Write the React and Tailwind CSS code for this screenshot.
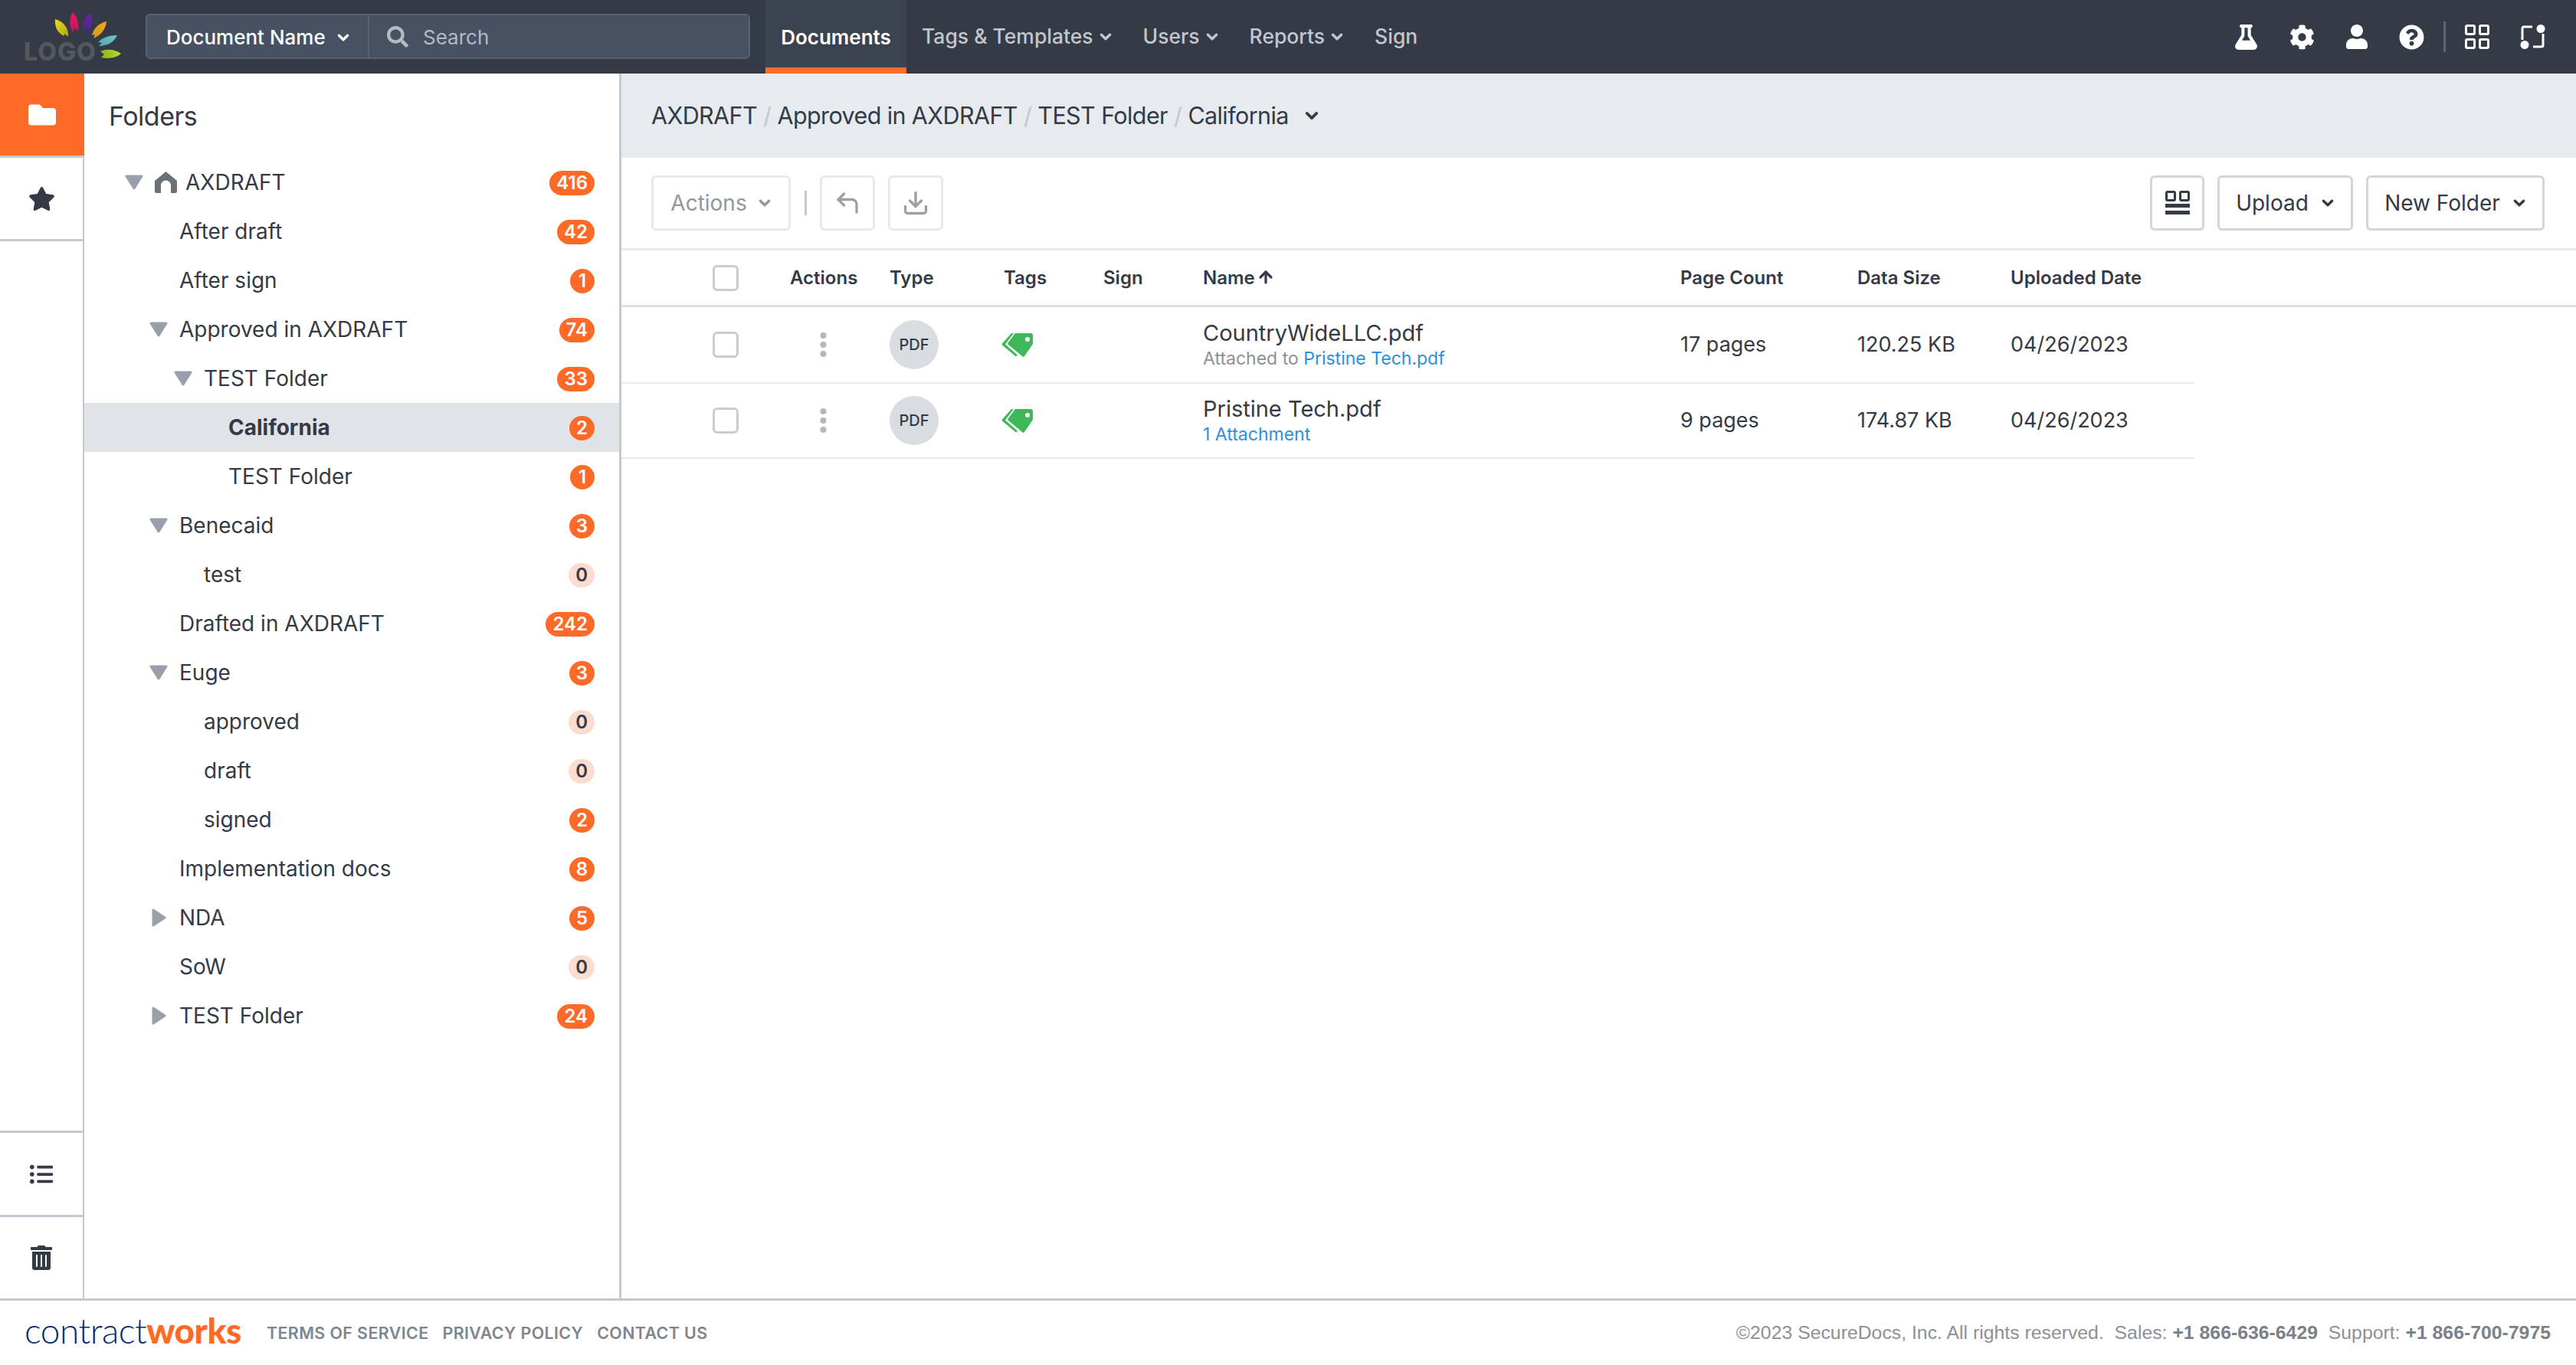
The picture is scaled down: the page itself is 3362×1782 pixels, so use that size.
import { CornerUpLeft, Download, ArrowUp } from "lucide-react";
import { FaFlask, FaCog, FaUser, FaQuestionCircle, FaFolder, FaStar, FaListUl, FaTrashAlt, FaSearch } from "react-icons/fa";

const font = "font-['Inter',sans-serif]";

const tree = [
  { name: "AXDRAFT", count: 416, level: 0, open: true, home: true },
  { name: "After draft", count: 42, level: 1 },
  { name: "After sign", count: 1, level: 1 },
  { name: "Approved in AXDRAFT", count: 74, level: 1, open: true },
  { name: "TEST Folder", count: 33, level: 2, open: true },
  { name: "California", count: 2, level: 3, active: true },
  { name: "TEST Folder", count: 1, level: 3 },
  { name: "Benecaid", count: 3, level: 1, open: true },
  { name: "test", count: 0, level: 2 },
  { name: "Drafted in AXDRAFT", count: 242, level: 1 },
  { name: "Euge", count: 3, level: 1, open: true },
  { name: "approved", count: 0, level: 2 },
  { name: "draft", count: 0, level: 2 },
  { name: "signed", count: 2, level: 2 },
  { name: "Implementation docs", count: 8, level: 1 },
  { name: "NDA", count: 5, level: 1, closed: true },
  { name: "SoW", count: 0, level: 1 },
  { name: "TEST Folder", count: 24, level: 1, closed: true },
];

const indent = ["pl-[53px]", "pl-[85px]", "pl-[117px]", "pl-[149px]"];

const files = [
  {
    name: "CountryWideLLC.pdf",
    sub: (
      <>
        <span className="text-[#8b9097]">Attached to </span>
        <span className="text-[#2b90df]">Pristine Tech.pdf</span>
      </>
    ),
    pages: "17 pages",
    size: "120.25 KB",
    date: "04/26/2023",
    rowHeight: "h-[100px]",
  },
  {
    name: "Pristine Tech.pdf",
    sub: <span className="text-[#2b90df]">1 Attachment</span>,
    pages: "9 pages",
    size: "174.87 KB",
    date: "04/26/2023",
    rowHeight: "h-[98px]",
  },
];

const columns = "grid grid-cols-[220px_130px_149px_130px_130px_623px_231px_200px_240px] items-center";

function Chevron({ className = "" }) {
  return (
    <svg viewBox="0 0 16 16" className={className} fill="none" stroke="currentColor" strokeWidth="3" strokeLinecap="round" strokeLinejoin="round">
      <path d="M3 5.5 8 10.5 13 5.5" />
    </svg>
  );
}

function Logo() {
  return (
    <div className="relative w-[190px] h-[96px] shrink-0">
      <svg viewBox="0 0 200 100" className="absolute left-0 top-0 w-[200px] h-[100px]">
        <defs>
          <linearGradient id="y" x1="0" y1="0" x2="1" y2="1"><stop offset="0" stopColor="#e8dc1e" /><stop offset="1" stopColor="#a8a814" /></linearGradient>
          <linearGradient id="p" x1="0" y1="0" x2="0" y2="1"><stop offset="0" stopColor="#f0155f" /><stop offset="1" stopColor="#b51a5c" /></linearGradient>
          <linearGradient id="u" x1="0" y1="0" x2="0" y2="1"><stop offset="0" stopColor="#6a1fa8" /><stop offset="1" stopColor="#4a2a8a" /></linearGradient>
          <linearGradient id="o" x1="1" y1="0" x2="0" y2="1"><stop offset="0" stopColor="#f7a31c" /><stop offset="1" stopColor="#c9a01e" /></linearGradient>
          <linearGradient id="t" x1="1" y1="0" x2="0" y2="1"><stop offset="0" stopColor="#6fc5cc" /><stop offset="1" stopColor="#5aa4ae" /></linearGradient>
          <linearGradient id="g" x1="1" y1="0" x2="0" y2="0"><stop offset="0" stopColor="#bcd92a" /><stop offset="1" stopColor="#8fb026" /></linearGradient>
        </defs>
        <path d="M72 25C84 28 90 38 89 48L84 44 84 47C76 44 71 36 72 25Z" fill="url(#y)" />
        <path d="M95 16C101 22 104 32 102 42L98 36 95 42C90 34 90 24 95 16Z" fill="url(#p)" />
        <path d="M118 17C122 25 121 35 116 42L113 36 109 42C107 32 111 22 118 17Z" fill="url(#u)" />
        <path d="M139 28C138 38 132 46 122 50L124 45 120 46C122 37 129 30 139 28Z" fill="url(#o)" />
        <path d="M153 46C149 55 140 60 129 60L133 56 128 55C134 49 143 46 153 46Z" fill="url(#t)" />
        <path d="M158 70C151 76 141 77 132 75L136 71 131 67C140 63 151 65 158 70Z" fill="url(#g)" />
      </svg>
      <span className="absolute left-[31px] top-[52px] text-[32px] font-extrabold leading-[32px] tracking-[1px] text-[#54585c]">LOGO</span>
    </div>
  );
}

function TopNav() {
  return (
    <header className="h-[96px] shrink-0 bg-[#343a46] flex items-stretch">
      <Logo />
      <div className="w-[789px] h-[59px] mt-[18px] bg-[#475161] border-2 border-[#586272] rounded-[6px] flex items-center">
        <div className="w-[290px] h-full border-r-2 border-[#586272] flex items-center pl-[25px] pt-[2px] text-white text-[26px] font-medium">
          Document Name
          <Chevron className="w-[18px] h-[18px] ml-[14px]" />
        </div>
        <FaSearch className="w-[28px] h-[28px] ml-[23px] text-[#b4b9c2]" />
        <span className="ml-[19px] pt-[2px] text-[26px] text-[#b4b9c2]">Search</span>
      </div>
      <nav className="flex items-stretch ml-[20px] text-[26.5px] font-medium text-[#c3c7cd]">
        <div className="w-[184px] bg-[#3c4350] border-b-[8px] border-[#ff6a26] flex items-center justify-center pt-[8px] text-[26px] text-white font-semibold">Documents</div>
        <div className="flex items-center ml-[20px]">Tags &amp; Templates<Chevron className="w-[18px] h-[18px] ml-[7px]" /></div>
        <div className="flex items-center ml-[40px]">Users<Chevron className="w-[18px] h-[18px] ml-[7px]" /></div>
        <div className="flex items-center ml-[40px]">Reports<Chevron className="w-[18px] h-[18px] ml-[7px]" /></div>
        <div className="flex items-center ml-[40px]">Sign</div>
      </nav>
      <div className="ml-auto mr-[40px] flex items-center text-white">
        <FaFlask className="w-[33px] h-[33px]" />
        <FaCog className="w-[33px] h-[33px] ml-[40px]" />
        <FaUser className="w-[28px] h-[32px] ml-[41px]" />
        <FaQuestionCircle className="w-[33px] h-[33px] ml-[41px]" />
        <div className="w-[3px] h-[40px] bg-[#5b6678] ml-[25px]" />
        <svg viewBox="0 0 32 32" className="w-[32px] h-[32px] ml-[25px]" fill="none" stroke="currentColor" strokeWidth="3">
          <rect x="1.5" y="1.5" width="11" height="11" rx="1.5" />
          <rect x="19.5" y="1.5" width="11" height="11" rx="1.5" />
          <rect x="1.5" y="19.5" width="11" height="11" rx="1.5" />
          <rect x="19.5" y="19.5" width="11" height="11" rx="1.5" />
        </svg>
        <svg viewBox="0 0 33 32" className="w-[33px] h-[32px] ml-[40px]" fill="none" stroke="currentColor" strokeWidth="3">
          <path d="M3 20V5a2 2 0 0 1 2-2H16" />
          <path d="M30 12V27a2 2 0 0 1-2 2H17" />
          <circle cx="27" cy="5.5" r="5.5" fill="currentColor" stroke="none" />
          <circle cx="6" cy="26.5" r="5.5" fill="currentColor" stroke="none" />
        </svg>
      </div>
    </header>
  );
}

function Rail() {
  return (
    <aside className="w-[110px] shrink-0 border-r-2 border-[#c5c8cc] flex flex-col text-[#343a46]">
      <div className="h-[110px] bg-[#ff6a26] border-b-[3px] border-[#c5c8cc] flex items-center justify-center -mr-[2px]">
        <FaFolder className="w-[36px] h-[36px] text-white" />
      </div>
      <div className="h-[109px] border-b-[3px] border-[#c5c8cc] flex items-center justify-center">
        <FaStar className="w-[35px] h-[35px]" />
      </div>
      <div className="mt-auto h-[110px] border-t-[3px] border-[#c5c8cc] flex items-center justify-center">
        <FaListUl className="w-[30px] h-[30px]" />
      </div>
      <div className="h-[109px] border-t-[3px] border-[#c5c8cc] flex items-center justify-center">
        <FaTrashAlt className="w-[32px] h-[32px]" />
      </div>
    </aside>
  );
}

function HomeIcon() {
  return (
    <svg viewBox="0 0 29 28" className="w-[29px] h-[28px] mr-[11px] shrink-0">
      <path fill="#6b7079" fillRule="evenodd" d="M14.5 0 29 12V26a2 2 0 0 1-2 2H21V18a6.500 6.500 0 0 0-13 0V28H2a2 2 0 0 1-2-2V12Z" />
    </svg>
  );
}

function Twisty({ open, closed }) {
  if (open) {
    return (
      <svg viewBox="0 0 24 20" className="w-[24px] h-[20px] mr-[15px] shrink-0">
        <path d="M2 2H22L12 18Z" fill="#9a9fa9" stroke="#9a9fa9" strokeWidth="3" strokeLinejoin="round" />
      </svg>
    );
  }
  if (closed) {
    return (
      <svg viewBox="0 0 24 24" className="w-[24px] h-[24px] mr-[15px] shrink-0">
        <path d="M5 2V22L20 12Z" fill="#9a9fa9" stroke="#9a9fa9" strokeWidth="3" strokeLinejoin="round" />
      </svg>
    );
  }
  return <div className="w-[24px] mr-[15px] shrink-0" />;
}

function Badge({ count }) {
  const zero = count === 0;
  return (
    <span
      className={
        "ml-auto mt-[2px] h-[32px] min-w-[32px] px-[9px] rounded-full flex items-center justify-center text-[24px] font-semibold " +
        (zero ? "bg-[#fcdccf] text-[#343a46]" : "bg-[#ff6a26] text-white")
      }
    >
      {count}
    </span>
  );
}

function Sidebar() {
  return (
    <aside className="w-[701px] shrink-0 border-r-[3px] border-[#c5c8cc] text-[#343a46]">
      <div className="h-[110px] pl-[32px] flex items-center text-[34px] tracking-[-0.5px]">Folders</div>
      {tree.map((item, i) => (
        <div key={i} className={"h-16 flex items-center pr-[32px] text-[28px] " + indent[item.level] + (item.active ? " bg-[#e0e3e8] font-bold" : "")}>
          <Twisty open={item.open} closed={item.closed} />
          {item.home && <HomeIcon />}
          <span>{item.name}</span>
          <Badge count={item.count} />
        </div>
      ))}
    </aside>
  );
}

function ToolbarButton({ className = "", children }) {
  return (
    <button className={"h-[72px] rounded-[6px] border-[3px] flex items-center justify-center text-[28px] " + className}>
      {children}
    </button>
  );
}

function Content() {
  return (
    <main className="flex-1 min-w-0 flex flex-col text-[#343a46]">
      <div className="h-[110px] shrink-0 bg-[#e7eaef] pl-[39px] flex items-center text-[30.5px] tracking-[-0.6px]">
        <span>AXDRAFT</span>
        <span className="mx-[8px] text-[#c3c7cd]">/</span>
        <span>Approved in AXDRAFT</span>
        <span className="mx-[8px] text-[#c3c7cd]">/</span>
        <span>TEST Folder</span>
        <span className="mx-[8px] text-[#c3c7cd]">/</span>
        <span>California</span>
        <Chevron className="w-[20px] h-[20px] ml-[20px]" />
      </div>

      <div className="h-[121px] shrink-0 border-b-[3px] border-[#e7eaef] pl-[39px] pr-[41px] flex items-center">
        <ToolbarButton className="w-[182px] border-[#e8e9eb] text-[#92969d]">
          Actions
          <Chevron className="w-[18px] h-[18px] ml-[14px]" />
        </ToolbarButton>
        <div className="w-[3px] h-[32px] bg-[#c5c8cc] ml-[18px] mr-[17px]" />
        <ToolbarButton className="w-[72px] border-[#e8e9eb] text-[#9b9fa6]">
          <CornerUpLeft className="w-[36px] h-[36px]" strokeWidth={2.2} />
        </ToolbarButton>
        <ToolbarButton className="w-[72px] ml-[17px] border-[#e8e9eb] text-[#9b9fa6]">
          <Download className="w-[36px] h-[36px]" strokeWidth={2.2} />
        </ToolbarButton>
        <ToolbarButton className="w-[71px] ml-auto border-[#d4d5d7]">
          <svg viewBox="0 0 32 32" className="w-[32px] h-[32px]" fill="none" stroke="currentColor" strokeWidth="3">
            <rect x="1.500" y="1.500" width="11" height="11" rx="1.500" />
            <rect x="19.500" y="1.500" width="11" height="11" rx="1.500" />
            <path d="M0 19.500H32M0 28.500H32" strokeWidth="5" />
          </svg>
        </ToolbarButton>
        <ToolbarButton className="w-[177px] ml-[17px] border-[#d4d5d7]">
          Upload
          <Chevron className="w-[18px] h-[18px] ml-[16px]" />
        </ToolbarButton>
        <ToolbarButton className="w-[233px] ml-[17px] border-[#d4d5d7]">
          New Folder
          <Chevron className="w-[18px] h-[18px] ml-[16px]" />
        </ToolbarButton>
      </div>

      <div className={columns + " h-[74px] shrink-0 border-b-[3px] border-[#dcdfe3] text-[24px] font-semibold"}>
        <div className="pl-[119px]"><div className="w-[34px] h-[34px] rounded-[6px] border-[3px] border-[#c9cbcf]" /></div>
        <div>Actions</div>
        <div>Type</div>
        <div>Tags</div>
        <div>Sign</div>
        <div className="flex items-center">Name<ArrowUp className="w-[24px] h-[24px] ml-[2px] -mt-[2px]" strokeWidth={3.2} /></div>
        <div>Page Count</div>
        <div>Data Size</div>
        <div>Uploaded Date</div>
      </div>

      {files.map((file) => (
        <div key={file.name} className={columns + " w-[2053px] shrink-0 border-b-[2px] border-[#e7eaef] " + file.rowHeight}>
          <div className="pl-[119px]"><div className="w-[34px] h-[34px] rounded-[6px] border-[3px] border-[#c9cbcf]" /></div>
          <div className="pl-[39px]">
            <svg viewBox="0 0 9 32" className="w-[9px] h-[32px] fill-[#b4b7bc]">
              <circle cx="4.500" cy="4" r="4" />
              <circle cx="4.500" cy="16" r="4" />
              <circle cx="4.500" cy="28" r="4" />
            </svg>
          </div>
          <div>
            <div className="w-[64px] h-[64px] rounded-full bg-[#d9dce1] flex items-center justify-center text-[20px] font-medium">PDF</div>
          </div>
          <div>
            <svg viewBox="0 0 41 32" className="w-[41px] h-[32px] -ml-[3px]">
              <path fillRule="evenodd" fill="#3fb85c" d="M18 1H38a3 3 0 0 1 3 3V15L30 31a2 2 0 0 1-3 0L9 16a2 2 0 0 1 0-3ZM34 6a3 3 0 1 0 0 6 3 3 0 0 0 0-6Z" />
              <path fill="#3fb85c" d="M13 1 1.500 14a2 2 0 0 0 0 3L19 31.500 21 29.500 5 15.500 16 1Z" />
            </svg>
          </div>
          <div />
          <div>
            <div className="text-[29px] leading-[36px]">{file.name}</div>
            <div className="text-[23px] leading-[30px]">{file.sub}</div>
          </div>
          <div className="text-[27px]">{file.pages}</div>
          <div className="text-[27px]">{file.size}</div>
          <div className="text-[27px]">{file.date}</div>
        </div>
      ))}
    </main>
  );
}

function Footer() {
  return (
    <footer className="h-[87px] shrink-0 border-t-[3px] border-[#c5c8cc] flex items-center pl-[32px] pr-[33px] text-[#80858c]">
      <div className="font-['Lato',sans-serif] text-[46px] leading-none tracking-[-0.5px] w-[316px] -mt-[6px]">
        <span className="font-light text-[#0d2c6b]">contract</span>
        <span className="font-black text-[#ff6a26]">works</span>
      </div>
      <div className="flex gap-[18px] text-[21.4px] font-semibold tracking-[0.4px]">
        <span>TERMS OF SERVICE</span>
        <span>PRIVACY POLICY</span>
        <span>CONTACT US</span>
      </div>
      <div className="ml-auto font-['Liberation_Sans',sans-serif] text-[24.8px] text-[#8c9096] whitespace-pre">
        ©2023 SecureDocs, Inc. All rights reserved.  Sales: <b className="text-[#7c8087]">+1 866-636-6429</b>  Support: <b className="text-[#7c8087]">+1 866-700-7975</b>
      </div>
    </footer>
  );
}

export default function App() {
  return (
    <div className={"h-screen flex flex-col bg-white overflow-hidden " + font}>
      <TopNav />
      <div className="flex-1 min-h-0 flex">
        <Rail />
        <Sidebar />
        <Content />
      </div>
      <Footer />
    </div>
  );
}
